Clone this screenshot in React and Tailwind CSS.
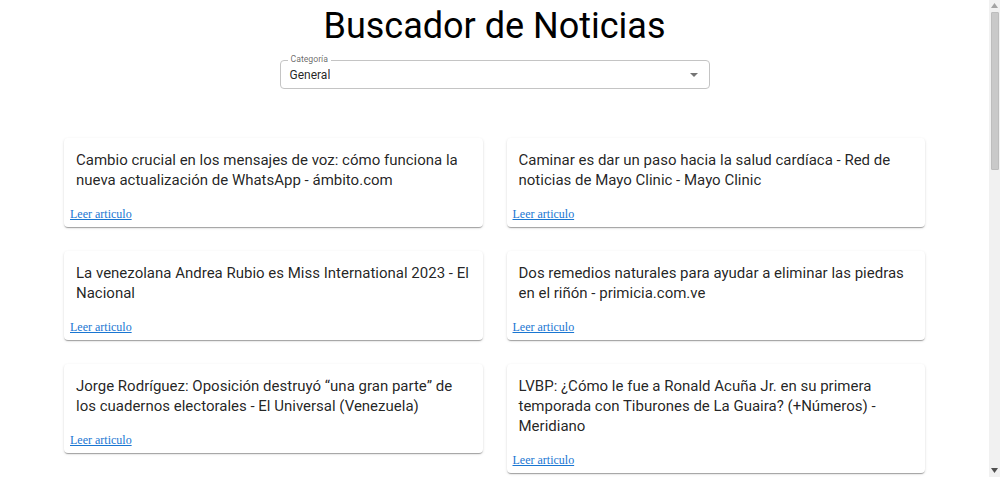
import React from 'react';

const articles = [
  'Cambio crucial en los mensajes de voz: cómo funciona la nueva actualización de WhatsApp - ámbito.com',
  'Caminar es dar un paso hacia la salud cardíaca - Red de noticias de Mayo Clinic - Mayo Clinic',
  'La venezolana Andrea Rubio es Miss International 2023 - El Nacional',
  'Dos remedios naturales para ayudar a eliminar las piedras en el riñón - primicia.com.ve',
  'Jorge Rodríguez: Oposición destruyó “una gran parte” de los cuadernos electorales - El Universal (Venezuela)',
  'LVBP: ¿Cómo le fue a Ronald Acuña Jr. en su primera temporada con Tiburones de La Guaira? (+Números) - Meridiano',
];

function NewsCard({ title }) {
  return (
    <div className="bg-white rounded-[4px] shadow-[0_2px_1px_-1px_rgba(0,0,0,0.2),0_1px_1px_0_rgba(0,0,0,0.14),0_1px_3px_0_rgba(0,0,0,0.12)]">
      <div className="px-3 pt-3 pb-[14px]">
        <p className="font-['Roboto'] text-[15px] leading-[20px] text-[rgba(0,0,0,0.87)]">{title}</p>
      </div>
      <div className="px-1.5 pb-[4px] leading-[18px]">
        <a href="#" className="font-['Liberation_Serif',serif] text-[12px] leading-[18px] text-[#1976d2] underline">
          Leer articulo
        </a>
      </div>
    </div>
  );
}

function Scrollbar() {
  return (
    <div className="w-[11px] h-screen bg-[#f1f1f1] flex flex-col items-center shrink-0">
      <svg width="7" height="5" viewBox="0 0 7 5" className="mt-[3px]">
        <path d="M0 5 L7 5 L3.5 0 Z" fill="#a3a3a3" />
      </svg>
      <div className="mt-[4px] w-[8px] h-[158px] bg-[#c9c9c9] border border-[#bdbdbd] rounded-[1px]" />
      <div className="flex-1" />
      <svg width="7" height="5" viewBox="0 0 7 5" className="mb-[4px]">
        <path d="M0 0 L7 0 L3.5 5 Z" fill="#505050" />
      </svg>
    </div>
  );
}

export default function App() {
  return (
    <div className="h-screen flex bg-white overflow-hidden">
      <div className="flex-1 min-w-0 font-['Roboto',sans-serif]">
        <h1 className="text-center text-[36px] leading-[48px] pt-[2px] text-black font-normal">Buscador de Noticias</h1>

        <div className="flex justify-center mt-[10px]">
          <div className="relative w-[430px]">
            <div className="h-[29px] border border-[#c4c4c4] rounded-[4px] flex items-center justify-between pl-[9px] pr-[11px]">
              <span className="text-[12px] text-[rgba(0,0,0,0.87)] mt-[1px]">General</span>
              <svg width="8" height="4" viewBox="0 0 8 4">
                <path d="M0 0 L8 0 L4 4 Z" fill="rgba(0,0,0,0.54)" />
              </svg>
            </div>
            <span className="absolute left-[8px] top-[-6px] bg-white px-[3px] text-[8.7px] leading-[11px] text-[rgba(0,0,0,0.6)]">
              Categoría
            </span>
          </div>
        </div>

        <div className="mx-auto w-[861px] mt-[49px] grid grid-cols-2 gap-x-[24px] gap-y-[24px] items-start">
          {articles.map((t) => (
            <NewsCard key={t} title={t} />
          ))}
        </div>
      </div>
      <Scrollbar />
    </div>
  );
}
